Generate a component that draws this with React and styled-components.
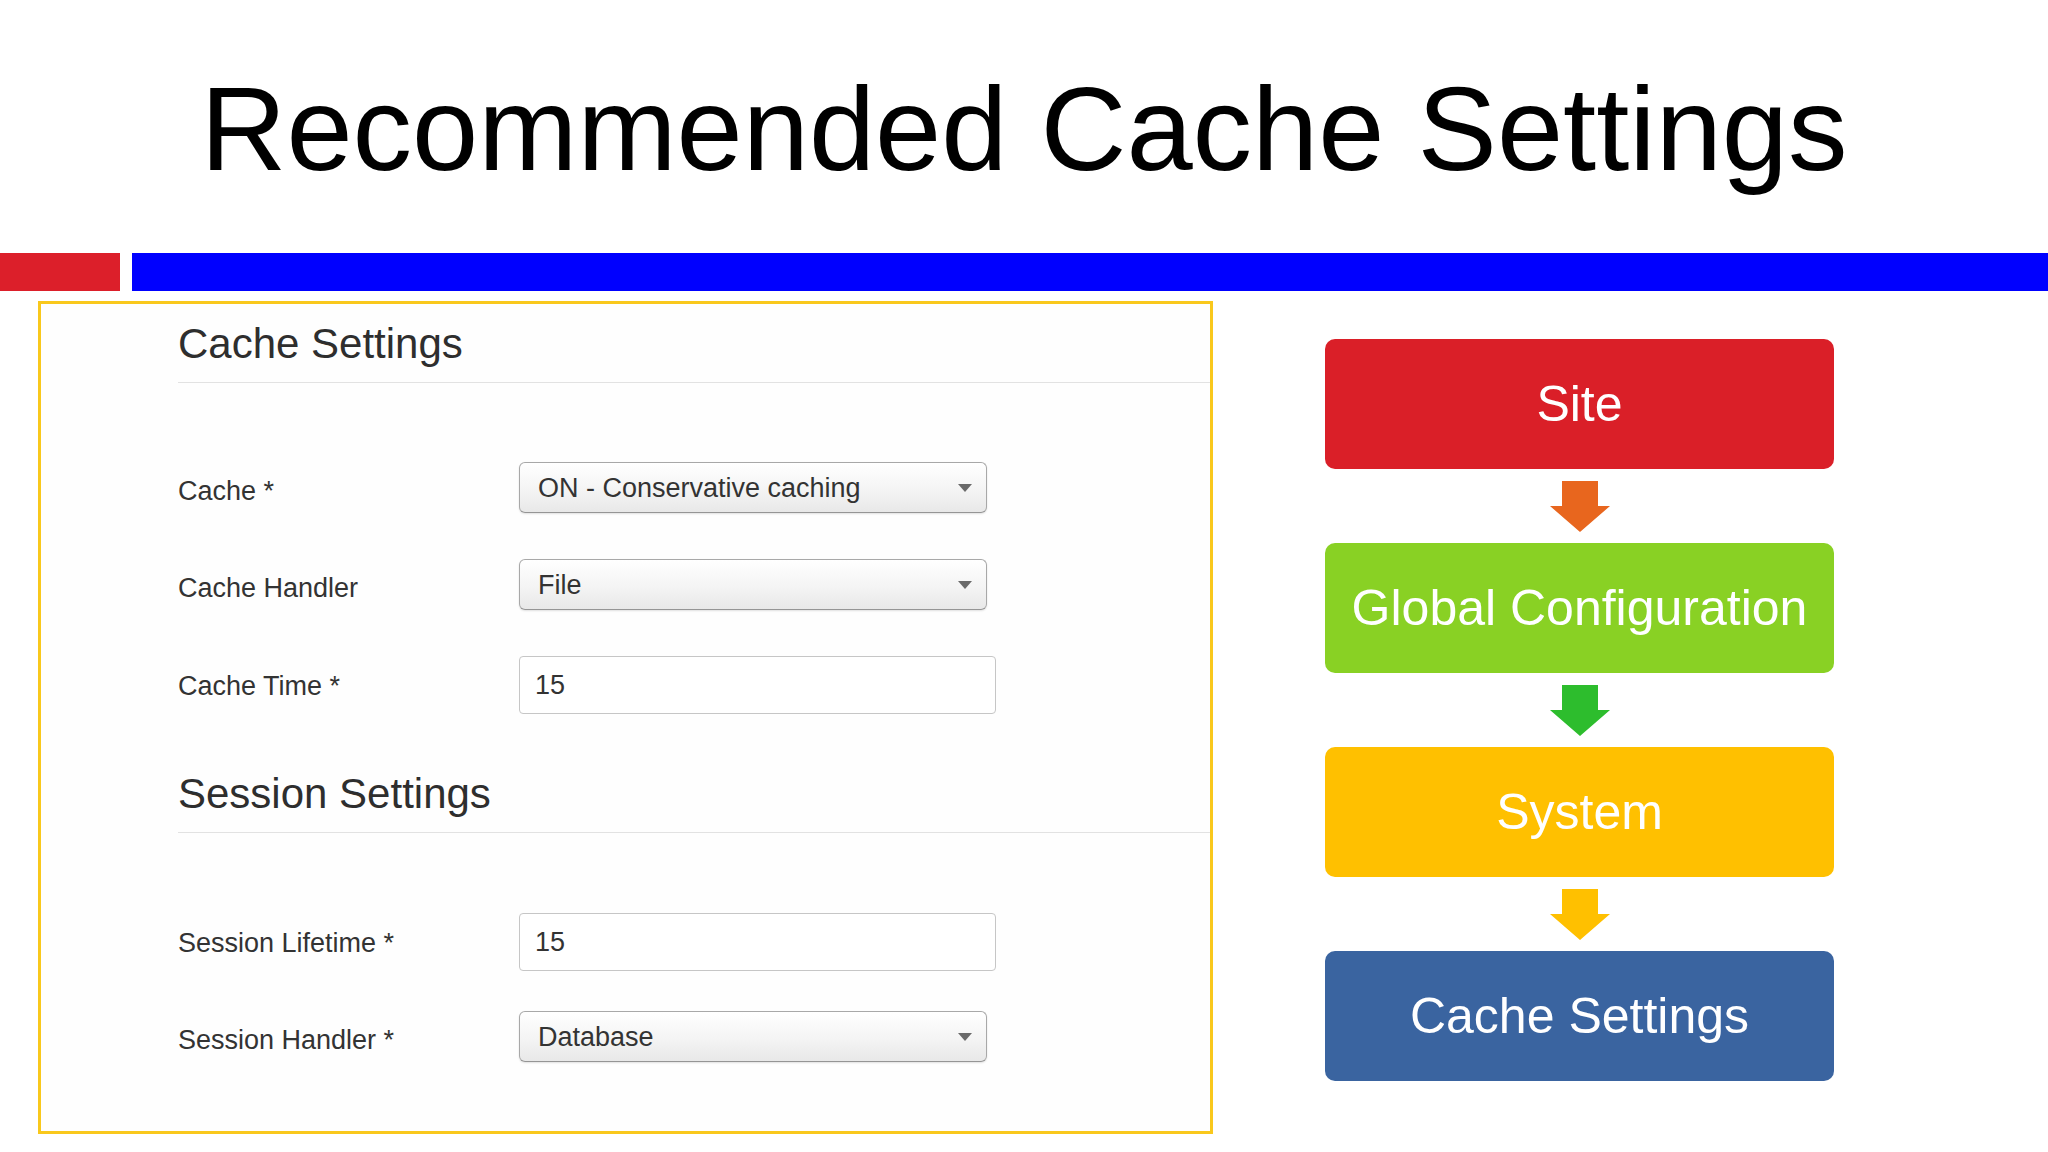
import styled, { createGlobalStyle } from "styled-components";

const GlobalStyle = createGlobalStyle`
  html, body {
    margin: 0;
    padding: 0;
    background: #ffffff;
  }
  body {
    font-family: "Liberation Sans", Arial, sans-serif;
  }
`;

const Slide = styled.div`
  width: 2048px;
  height: 1152px;
  overflow: hidden;
  background: #ffffff;
`;

const Title = styled.h1`
  margin: 0;
  padding-top: 69px;
  font-size: 119px;
  line-height: 1;
  font-weight: normal;
  text-align: center;
  color: #000000;
`;

const AccentBar = styled.div`
  display: flex;
  gap: 12px;
  height: 38px;
  margin-top: 65px;
`;

const RedSegment = styled.div`
  width: 120px;
  background: #dc1f2a;
`;

const BlueSegment = styled.div`
  flex: 1;
  background: #0000ff;
`;

const Content = styled.div`
  display: flex;
  align-items: flex-start;
  margin-top: 10px;
`;

const SettingsPanel = styled.section`
  box-sizing: border-box;
  width: 1175px;
  height: 833px;
  margin-left: 38px;
  padding: 15px 0 0 137px;
  border: 3px solid #f9c81c;
  background: #fefefe;
`;

const SectionHeading = styled.h2`
  margin: ${(p) => (p.$spaced ? "55px 0 0" : "0")};
  padding-bottom: 13px;
  border-bottom: 1px solid #e2e2e2;
  font-size: 42px;
  line-height: 50px;
  font-weight: normal;
  color: #2e2e2e;
`;

const FieldList = styled.div`
  display: flex;
  flex-direction: column;
  gap: ${(p) => p.$gap}px;
  margin-top: ${(p) => p.$top}px;
`;

const FieldRow = styled.div`
  display: flex;
  align-items: center;
`;

const FieldLabel = styled.label`
  width: 341px;
  padding-top: ${(p) => p.$drop}px;
  font-size: 27px;
  color: #333333;
`;

const SelectWrap = styled.div`
  position: relative;
  width: 468px;
  height: 51px;
`;

const Select = styled.select`
  box-sizing: border-box;
  width: 100%;
  height: 100%;
  padding: 0 40px 0 18px;
  appearance: none;
  border: 1px solid #a8a8a8;
  border-bottom-color: #959595;
  border-radius: 6px;
  background: linear-gradient(to bottom, #ffffff 0%, #f4f4f4 55%, #e8e8e8 100%);
  box-shadow: 0 1px 2px rgba(0, 0, 0, 0.12);
  font-family: "Liberation Sans", Arial, sans-serif;
  font-size: 27px;
  color: #333333;
`;

const Caret = styled.span`
  position: absolute;
  right: 15px;
  top: 50%;
  margin-top: -4px;
  width: 0;
  height: 0;
  border-left: 7px solid transparent;
  border-right: 7px solid transparent;
  border-top: 8px solid #6a6a6a;
  pointer-events: none;
`;

const TextInput = styled.input`
  box-sizing: border-box;
  width: 477px;
  height: 58px;
  padding: 0 15px;
  border: 1px solid #c6c6c6;
  border-radius: 4px;
  background: #ffffff;
  font-family: "Liberation Sans", Arial, sans-serif;
  font-size: 27px;
  color: #333333;
`;

const FlowColumn = styled.div`
  display: flex;
  flex-direction: column;
  width: 509px;
  margin-left: 112px;
  padding-top: 38px;
`;

const FlowBox = styled.div`
  display: flex;
  align-items: center;
  justify-content: center;
  height: 130px;
  border-radius: 10px;
  background: ${(p) => p.$color};
  color: #ffffff;
  font-size: 50px;
`;

const ArrowSlot = styled.div`
  display: flex;
  align-items: center;
  justify-content: center;
  height: 74px;
`;

const cacheFields = [
  { label: "Cache *", type: "select", value: "ON - Conservative caching" },
  { label: "Cache Handler", type: "select", value: "File" },
  { label: "Cache Time *", type: "input", value: "15" },
];

const sessionFields = [
  { label: "Session Lifetime *", type: "input", value: "15" },
  { label: "Session Handler *", type: "select", value: "Database" },
];

const flowSteps = [
  { name: "Site", color: "#da1f28", arrow: "#e8661e" },
  { name: "Global Configuration", color: "#89d124", arrow: "#2dbd2d" },
  { name: "System", color: "#ffc000", arrow: "#ffc000" },
  { name: "Cache Settings", color: "#3a64a0" },
];

function Field({ label, type, value }) {
  const isSelect = type === "select";
  return (
    <FieldRow>
      <FieldLabel $drop={isSelect ? 8 : 2}>{label}</FieldLabel>
      {isSelect ? (
        <SelectWrap>
          <Select defaultValue={value}>
            <option>{value}</option>
          </Select>
          <Caret />
        </SelectWrap>
      ) : (
        <TextInput defaultValue={value} />
      )}
    </FieldRow>
  );
}

function DownArrow({ color }) {
  return (
    <svg width="60" height="51" viewBox="0 0 60 51">
      <polygon points="12,0 48,0 48,25 60,25 30,51 0,25 12,25" fill={color} />
    </svg>
  );
}

export default function App() {
  return (
    <>
      <GlobalStyle />
      <Slide>
        <Title>Recommended Cache Settings</Title>
        <AccentBar>
          <RedSegment />
          <BlueSegment />
        </AccentBar>
        <Content>
          <SettingsPanel>
            <SectionHeading>Cache Settings</SectionHeading>
            <FieldList $gap={46} $top={79}>
              {cacheFields.map((f) => (
                <Field key={f.label} {...f} />
              ))}
            </FieldList>
            <SectionHeading $spaced>Session Settings</SectionHeading>
            <FieldList $gap={40} $top={80}>
              {sessionFields.map((f) => (
                <Field key={f.label} {...f} />
              ))}
            </FieldList>
          </SettingsPanel>
          <FlowColumn>
            {flowSteps.map((step) => (
              <div key={step.name}>
                <FlowBox $color={step.color}>{step.name}</FlowBox>
                {step.arrow && (
                  <ArrowSlot>
                    <DownArrow color={step.arrow} />
                  </ArrowSlot>
                )}
              </div>
            ))}
          </FlowColumn>
        </Content>
      </Slide>
    </>
  );
}
